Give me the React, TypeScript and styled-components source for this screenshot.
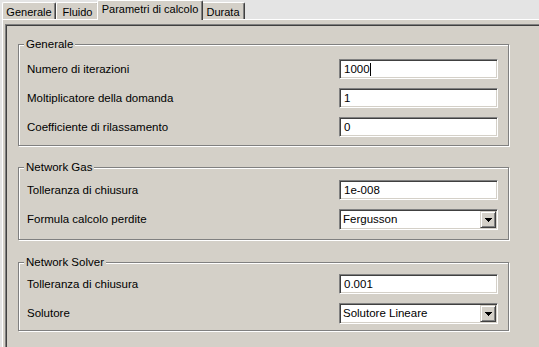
import styled, { createGlobalStyle } from "styled-components";

const face = "#d4d0c8";

const GlobalStyle = createGlobalStyle`
  html, body {
    margin: 0;
    padding: 0;
    background: #e4e4e4;
    overflow: hidden;
  }
  body {
    font-family: "Liberation Sans", Arial, sans-serif;
    font-size: 11.5px;
    color: #000;
  }
`;

type Field = { label: string; value: string; kind: "text" | "select"; caret?: boolean };
type Group = { title: string; fields: Field[]; padTop: number; padBottom: number; gapBefore: number };

const groups: Group[] = [
  {
    title: "Generale",
    padTop: 8,
    padBottom: 8,
    gapBefore: 0,
    fields: [
      { label: "Numero di iterazioni", value: "1000", kind: "text", caret: true },
      { label: "Moltiplicatore della domanda", value: "1", kind: "text" },
      { label: "Coefficiente di rilassamento", value: "0", kind: "text" },
    ],
  },
  {
    title: "Network Gas",
    padTop: 6,
    padBottom: 10,
    gapBefore: 15,
    fields: [
      { label: "Tolleranza di chiusura", value: "1e-008", kind: "text" },
      { label: "Formula calcolo perdite", value: "Fergusson", kind: "select" },
    ],
  },
  {
    title: "Network Solver",
    padTop: 5,
    padBottom: 7,
    gapBefore: 16,
    fields: [
      { label: "Tolleranza di chiusura", value: "0.001", kind: "text" },
      { label: "Solutore", value: "Solutore Lineare", kind: "select" },
    ],
  },
];

const tabs = [
  { label: "Generale", width: 54 },
  { label: "Fluido", width: 43 },
  { label: "Parametri di calcolo", width: 102, active: true },
  { label: "Durata", width: 44 },
];

const App = () => {
  return (
    <StyledWindow>
      <GlobalStyle />
      <StyledTabStrip>
        {tabs.map((t) => (
          <StyledTab key={t.label} $width={t.width} $active={t.active}>
            {t.label}
          </StyledTab>
        ))}
      </StyledTabStrip>
      <StyledTabPage>
        <StyledSunken>
          {groups.map((g) => (
            <StyledGroup key={g.title} $padTop={g.padTop} $padBottom={g.padBottom} $gapBefore={g.gapBefore}>
              <StyledLegend>{g.title}</StyledLegend>
              {g.fields.map((f) => (
                <StyledRow key={f.label + f.value}>
                  <span>{f.label}</span>
                  {f.kind === "text" ? (
                    <StyledTextField>
                      {f.value}
                      {f.caret && <StyledCaret />}
                    </StyledTextField>
                  ) : (
                    <StyledSelect>
                      <span>{f.value}</span>
                      <StyledDropButton>
                        <svg width="7" height="4" viewBox="0 0 7 4" shapeRendering="crispEdges">
                          <rect x="0" y="0" width="7" height="1" fill="#000" />
                          <rect x="1" y="1" width="5" height="1" fill="#000" />
                          <rect x="2" y="2" width="3" height="1" fill="#000" />
                          <rect x="3" y="3" width="1" height="1" fill="#000" />
                        </svg>
                      </StyledDropButton>
                    </StyledSelect>
                  )}
                </StyledRow>
              ))}
            </StyledGroup>
          ))}
        </StyledSunken>
      </StyledTabPage>
    </StyledWindow>
  );
};

export default App;

const StyledWindow = styled.div`
  box-sizing: border-box;
  display: flex;
  flex-direction: column;
  width: 100%;
  height: 347px;
  padding-left: 2px;
`;

const StyledTabStrip = styled.div`
  display: flex;
  align-items: flex-end;
  height: 19px;
  position: relative;
  z-index: 1;
`;

const StyledTab = styled.div<{ $width: number; $active?: boolean }>`
  box-sizing: border-box;
  width: ${({ $width, $active }) => ($active ? $width + 4 : $width)}px;
  height: ${({ $active }) => ($active ? 20 : 17)}px;
  margin: ${({ $active }) => ($active ? "0 -2px -1px -2px" : "0")};
  position: relative;
  z-index: ${({ $active }) => ($active ? 2 : 1)};
  background: ${face};
  border-left: 1px solid #fff;
  border-top: 1px solid #fff;
  border-right: 1px solid #404040;
  border-top-left-radius: 2px;
  border-top-right-radius: 2px;
  box-shadow: inset -1px 0 0 #808080;
  display: flex;
  justify-content: center;
  align-items: flex-start;
  padding-top: ${({ $active }) => ($active ? 2 : 3)}px;
  font-size: 11px;
  line-height: 13px;
  white-space: nowrap;
`;

const StyledTabPage = styled.div`
  flex: 1;
  display: flex;
  background: ${face};
  border-top: 1px solid #fff;
  border-left: 1px solid #fff;
  padding: 4px 0 0 2px;
`;

const StyledSunken = styled.div`
  flex: 1;
  display: flex;
  flex-direction: column;
  border-top: 1px solid #808080;
  border-left: 1px solid #808080;
  box-shadow: inset 1px 1px 0 #404040;
  padding: 13px 0 0 12px;
`;

const StyledGroup = styled.fieldset<{ $padTop: number; $padBottom: number; $gapBefore: number }>`
  box-sizing: border-box;
  width: 491px;
  min-inline-size: 0;
  margin: ${({ $gapBefore }) => $gapBefore}px 0 0 0;
  padding: ${({ $padTop, $padBottom }) => `${$padTop}px 10px ${$padBottom}px 8px`};
  border: 1px solid #808080;
  box-shadow: inset 1px 1px 0 #fff, 1px 1px 0 #fff;
  display: flex;
  flex-direction: column;
  gap: 9px;
`;

const StyledLegend = styled.legend`
  margin-left: -3px;
  padding: 0 2px;
  line-height: 13px;
  background: ${face};
`;

const StyledRow = styled.div`
  display: grid;
  grid-template-columns: 1fr 159px;
  grid-template-rows: 20px;
  align-items: center;
  height: 20px;
`;

const sunkenField = `
  box-sizing: border-box;
  border-top: 1px solid #808080;
  border-left: 1px solid #808080;
  border-bottom: 1px solid #fff;
  border-right: 1px solid #fff;
  box-shadow: inset 1px 1px 0 #404040, inset -1px -1px 0 ${face};
  background: #fff;
`;

const StyledTextField = styled.div`
  ${sunkenField}
  height: 20px;
  display: flex;
  align-items: center;
  padding-left: 4px;
  line-height: 13px;
`;

const StyledCaret = styled.span`
  display: inline-block;
  width: 1px;
  height: 13px;
  background: #000;
`;

const StyledSelect = styled.div`
  ${sunkenField}
  height: 21px;
  display: flex;
  align-items: center;
  justify-content: space-between;
  padding: 0 1px 0 3px;
  line-height: 13px;
`;

const StyledDropButton = styled.div`
  box-sizing: border-box;
  width: 16px;
  height: 17px;
  display: flex;
  align-items: center;
  justify-content: center;
  background: ${face};
  border-top: 1px solid ${face};
  border-left: 1px solid ${face};
  border-right: 1px solid #404040;
  border-bottom: 1px solid #404040;
  box-shadow: inset 1px 1px 0 #fff, inset -1px -1px 0 #808080;
  padding-top: 1px;
`;
